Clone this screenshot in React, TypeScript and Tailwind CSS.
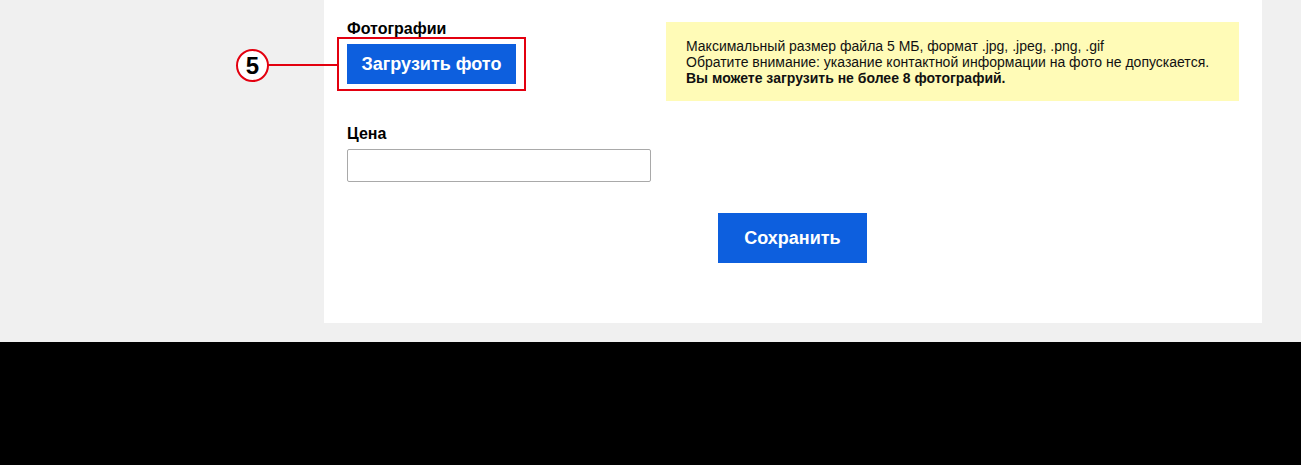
import React from "react";

export default function App() {
  return (
    <div className="relative w-[1301px] h-[465px] bg-black flex flex-col font-['Liberation_Sans',Arial,sans-serif] text-black">
      <div className="h-[342px] bg-[#f0f0f0] pl-[324px] pr-[39px]">
        <div className="bg-white h-[323px] px-[23px] pt-[20px] flex flex-col">
          <div className="flex">
            <div className="w-[319px] flex flex-col items-start">
              <div className="text-[16px] leading-[18px] font-bold">Фотографии</div>
              <button className="mt-[6px] h-[40px] w-[169px] bg-[#0d5fde] text-white text-[18px] font-bold">
                Загрузить фото
              </button>
            </div>
            <div className="mt-[2px] h-[79px] w-[573px] bg-[#fffbb7] pl-[20px] pt-[16px] text-[14px] leading-[16px] text-[#111]">
              <div>Максимальный размер файла 5 МБ, формат .jpg, .jpeg, .png, .gif</div>
              <div>Обратите внимание: указание контактной информации на фото не допускается.</div>
              <div className="font-bold">Вы можете загрузить не более 8 фотографий.</div>
            </div>
          </div>
          <div className="mt-[24px] text-[16px] leading-[18px] font-bold">Цена</div>
          <div className="mt-[6px] h-[33px] w-[304px] border border-[#a9a9a9] rounded-[2px] bg-white" />
          <div className="mt-[31px] flex justify-center">
            <button className="-ml-px h-[50px] w-[149px] bg-[#0d5fde] text-white text-[18px] font-bold">
              Сохранить
            </button>
          </div>
        </div>
      </div>
      <div className="absolute left-[337px] top-[37px] w-[189px] h-[54px] border-2 border-[#e3000f]" />
      <div className="absolute left-[267px] top-[64px] w-[71px] h-[2px] bg-[#e3000f]" />
      <div className="absolute left-[236px] top-[49px] w-[33px] h-[33px] rounded-full border-2 border-[#e3000f] bg-white flex items-center justify-center text-[24px] font-bold leading-none">
        5
      </div>
    </div>
  );
}
